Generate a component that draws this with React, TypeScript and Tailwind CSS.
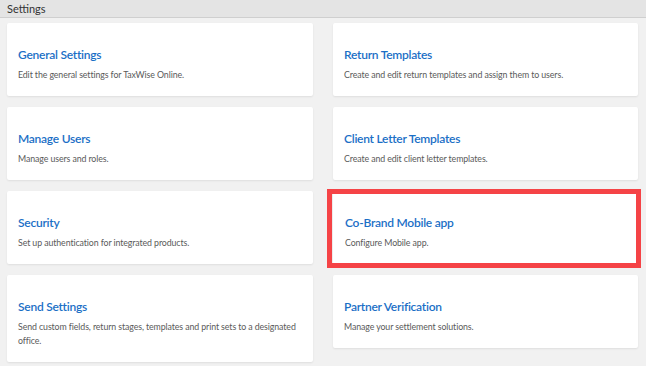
import React from "react"

type Item = {
  title: string
  desc: string
  highlight?: boolean
}

const left: Item[] = [
  { title: "General Settings", desc: "Edit the general settings for TaxWise Online." },
  { title: "Manage Users", desc: "Manage users and roles." },
  { title: "Security", desc: "Set up authentication for integrated products." },
  {
    title: "Send Settings",
    desc: "Send custom fields, return stages, templates and print sets to a designated office.",
  },
]

const right: Item[] = [
  { title: "Return Templates", desc: "Create and edit return templates and assign them to users." },
  { title: "Client Letter Templates", desc: "Create and edit client letter templates." },
  { title: "Co-Brand Mobile app", desc: "Configure Mobile app.", highlight: true },
  { title: "Partner Verification", desc: "Manage your settlement solutions." },
]

function SettingCard({ item }: { item: Item }) {
  return (
    <div
      className={
        item.highlight
          ? "relative rounded-[2px] bg-white pt-[24px] pb-[14px] pl-[12px] pr-[2px] shadow-[0_1px_2px_rgba(0,0,0,0.08)]"
          : "rounded-[2px] bg-white pt-[24px] pb-[14px] pl-[11px] pr-[2px] shadow-[0_1px_2px_rgba(0,0,0,0.08)]"
      }
    >
      {item.highlight && (
        <div className="pointer-events-none absolute -top-[2px] -bottom-[4px] -left-[6px] -right-[3px] border-[5px] border-[#f54346]" />
      )}
      <p className="text-[12px] leading-[16px] font-semibold tracking-[-0.25px] text-[#1b6fc6]">
        {item.title}
      </p>
      <p className="mt-[5px] text-[8.8px] leading-[14px] tracking-[-0.1px] text-[#5a5a5a]">
        {item.desc}
      </p>
    </div>
  )
}

export default function App() {
  return (
    <div
      className="min-h-[366px] w-[646px] bg-[#f1f1f1]"
      style={{ fontFamily: "Lato, 'Noto Sans', sans-serif" }}
    >
      {/* Header */}
      <div className="h-[18px] border-b border-[#cfcfcf] bg-[#e4e4e4] pl-[7px] text-[11px] leading-[17px] text-[#333]">
        Settings
      </div>

      {/* Cards */}
      <div className="flex gap-[20px] pt-[5px] pl-[7px] pr-[8px]">
        <div className="flex w-[306px] flex-col gap-[11px]">
          {left.map((item) => (
            <SettingCard key={item.title} item={item} />
          ))}
        </div>
        <div className="flex w-[305px] flex-col gap-[11px]">
          {right.map((item) => (
            <SettingCard key={item.title} item={item} />
          ))}
        </div>
      </div>
    </div>
  )
}
